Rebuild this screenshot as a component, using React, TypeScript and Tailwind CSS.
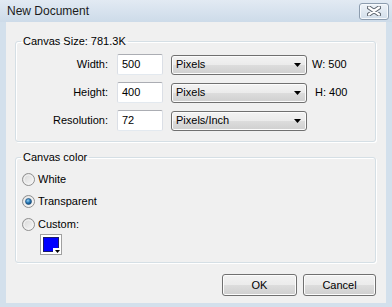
import React from "react";

const font = "font-['Segoe_UI','Liberation_Sans',Arial,sans-serif]";

const RadioDot = ({ checked }: { checked?: boolean }) => (
    <svg width="13" height="13" viewBox="0 0 13 13" className="shrink-0">
        <defs>
            <linearGradient id="rbg" x1="0" y1="0" x2="1" y2="1">
                <stop offset="0" stopColor="#d4d4d4" />
                <stop offset="1" stopColor="#fbfbfb" />
            </linearGradient>
            <radialGradient id="rdot" cx="0.4" cy="0.35" r="0.7">
                <stop offset="0" stopColor="#9ad3f5" />
                <stop offset="0.5" stopColor="#2a7bb8" />
                <stop offset="1" stopColor="#0d3f6e" />
            </radialGradient>
        </defs>
        <circle cx="6.5" cy="6.5" r="6" fill="url(#rbg)" stroke="#8f8f8f" />
        <circle cx="6.5" cy="6.5" r="4.5" fill="none" stroke="#f4f4f4" />
        {checked && <circle cx="6.5" cy="6.5" r="3" fill="url(#rdot)" stroke="#1d4f7c" strokeWidth="0.6" />}
    </svg>
);

const Select = ({ value }: { value: string }) => (
    <div className="w-[136px] h-[20px] rounded-[3px] border border-[#707070] bg-[linear-gradient(#f3f3f3_0%,#ebebeb_50%,#dddddd_50%,#cfcfcf_100%)] flex items-center justify-between pl-[4px] pr-[5px] shadow-[inset_0_0_0_1px_#fcfcfc]">
        <span>{value}</span>
        <svg width="7" height="4" viewBox="0 0 7 4">
            <path d="M0 0 H7 L3.5 4 Z" fill="#000" />
        </svg>
    </div>
);

const Button = ({ label, w }: { label: string; w: string }) => (
    <button
        className={`${w} h-[22px] rounded-[3px] border border-[#707070] bg-[linear-gradient(#f2f2f2_0%,#ebebeb_50%,#dddddd_50%,#cfcfcf_100%)] shadow-[inset_0_0_0_1px_#fcfcfc] text-[11px] text-black`}
    >
        {label}
    </button>
);

const SizeRow = ({ label, value, unit, info }: { label: string; value: string; unit: string; info?: string }) => (
    <div className="flex items-center h-[21px]">
        <span className="w-[92px] text-right">{label}</span>
        <div className="ml-[9px] w-[46px] h-[21px] bg-white border border-[#abadb3] border-b-[#e3e9ef] border-x-[#dbdfe6] rounded-[2px] flex items-center pl-[4px]">
            {value}
        </div>
        <div className="ml-[8px]">
            <Select value={unit} />
        </div>
        {info && <span className="ml-[5px]">{info}</span>}
    </div>
);

export default function App() {
    return (
        <div className={`w-[392px] h-[307px] bg-[#d3e0ec] flex flex-col ${font} text-[11px] text-black`}>
            {/* Title bar */}
            <div className="h-[22px] flex items-center justify-between pl-[7px] pr-[3px] bg-[linear-gradient(#e2eaf3,#cddbe9)]">
                <span className="text-[12px] text-[#1b1b1b]">New Document</span>
                <div className="w-[30px] h-[17px] rounded-[3px] border border-[#8c9cae] bg-[linear-gradient(#eef3f8,#d2deea)] flex items-center justify-center shadow-[inset_0_0_0_1px_#f6f9fc]">
                    <svg width="14" height="10" viewBox="0 0 14 10">
                        <path d="M2 1.5 L12 8.5 M12 1.5 L2 8.5" stroke="#5a626c" strokeWidth="4.2" strokeLinecap="round" />
                        <path d="M2 1.5 L12 8.5 M12 1.5 L2 8.5" stroke="#ffffff" strokeWidth="2.2" strokeLinecap="round" />
                    </svg>
                </div>
            </div>

            {/* Client area */}
            <div className="flex-1 mx-[6px] mb-[4px] bg-[#f0f0f0] flex flex-col pl-[9px] pr-[10px] pt-[11px]">
                <fieldset className="border border-[#d5dfe5] rounded-[3px] pt-[5px] pb-[10px] shadow-[inset_1px_1px_0_#ffffff,1px_1px_0_#ffffff]">
                    <legend className="ml-[5px] px-[2px] leading-[16px]">Canvas Size: 781.3K</legend>
                    <div className="flex flex-col gap-[7px]">
                        <SizeRow label="Width:" value="500" unit="Pixels" info="W: 500" />
                        <SizeRow label="Height:" value="400" unit="Pixels" info="&nbsp;H: 400" />
                        <SizeRow label="Resolution:" value="72" unit="Pixels/Inch" />
                    </div>
                </fieldset>

                <fieldset className="mt-[7px] border border-[#d5dfe5] rounded-[3px] pt-[6px] pb-[7px] shadow-[inset_1px_1px_0_#ffffff,1px_1px_0_#ffffff]">
                    <legend className="ml-[5px] px-[2px] leading-[16px]">Canvas color</legend>
                    <div className="flex flex-col gap-[6.5px] pl-[6px]">
                        <label className="flex items-center gap-[3px] h-[16px]">
                            <RadioDot />
                            <span>White</span>
                        </label>
                        <label className="flex items-center gap-[3px] h-[16px]">
                            <RadioDot checked />
                            <span>Transparent</span>
                        </label>
                        <label className="flex items-center gap-[3px] h-[16px]">
                            <RadioDot />
                            <span>Custom:</span>
                        </label>
                    </div>
                    <div className="relative ml-[24px] mt-[2px] w-[22px] h-[21px] bg-white border border-[#a0a0a0] p-[2px]">
                        <div className="w-full h-full bg-[#0000ff] border border-[#1a1a6a]" />
                        <div className="absolute right-0 bottom-0 w-[8px] h-[6px] bg-white flex items-end justify-center pb-[1px]">
                            <svg width="5" height="3" viewBox="0 0 5 3">
                                <path d="M0 0 H5 L2.5 3 Z" fill="#000" />
                            </svg>
                        </div>
                    </div>
                </fieldset>

                <div className="mt-[11px] flex justify-end gap-[6px]">
                    <Button label="OK" w="w-[75px]" />
                    <Button label="Cancel" w="w-[73px]" />
                </div>
            </div>
        </div>
    );
}
